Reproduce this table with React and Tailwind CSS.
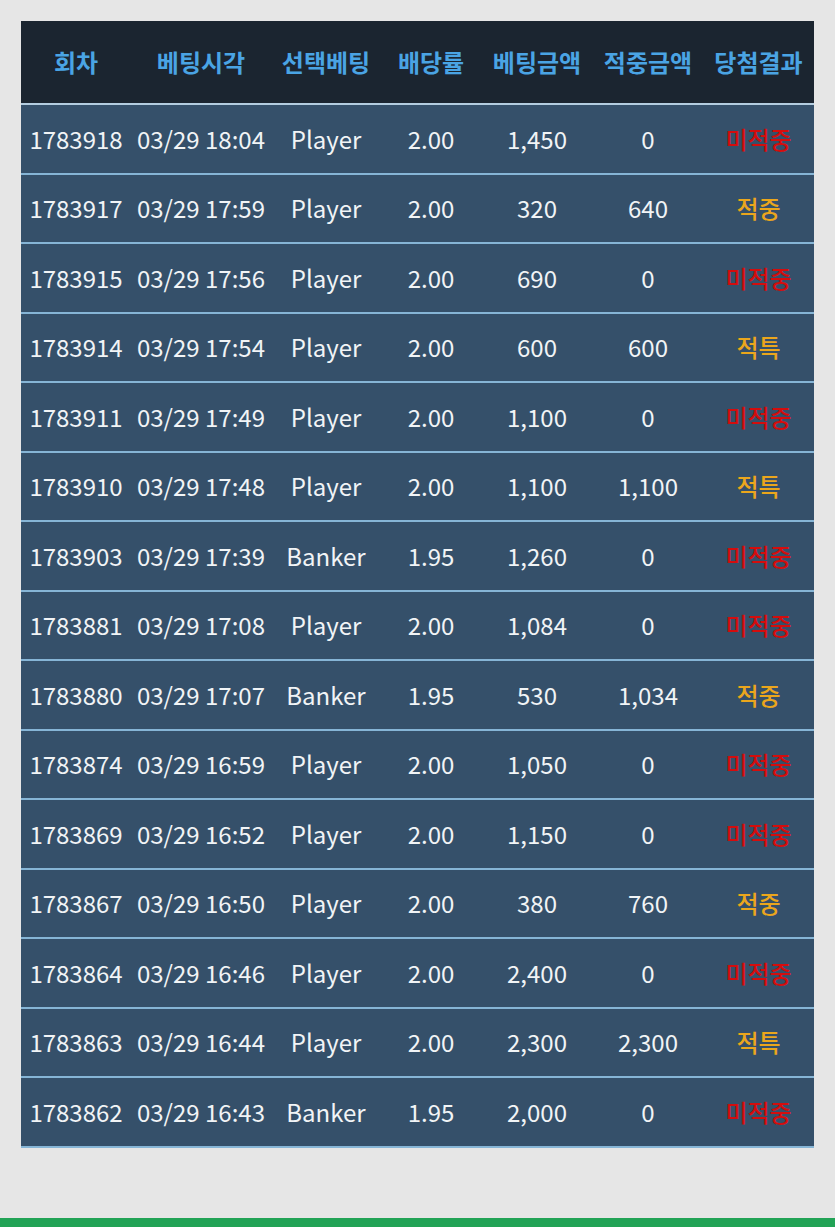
const headers = ["회차", "베팅시각", "선택베팅", "배당률", "베팅금액", "적중금액", "당첨결과"];

const rows = [
  ["1783918", "03/29 18:04", "Player", "2.00", "1,450", "0", "미적중"],
  ["1783917", "03/29 17:59", "Player", "2.00", "320", "640", "적중"],
  ["1783915", "03/29 17:56", "Player", "2.00", "690", "0", "미적중"],
  ["1783914", "03/29 17:54", "Player", "2.00", "600", "600", "적특"],
  ["1783911", "03/29 17:49", "Player", "2.00", "1,100", "0", "미적중"],
  ["1783910", "03/29 17:48", "Player", "2.00", "1,100", "1,100", "적특"],
  ["1783903", "03/29 17:39", "Banker", "1.95", "1,260", "0", "미적중"],
  ["1783881", "03/29 17:08", "Player", "2.00", "1,084", "0", "미적중"],
  ["1783880", "03/29 17:07", "Banker", "1.95", "530", "1,034", "적중"],
  ["1783874", "03/29 16:59", "Player", "2.00", "1,050", "0", "미적중"],
  ["1783869", "03/29 16:52", "Player", "2.00", "1,150", "0", "미적중"],
  ["1783867", "03/29 16:50", "Player", "2.00", "380", "760", "적중"],
  ["1783864", "03/29 16:46", "Player", "2.00", "2,400", "0", "미적중"],
  ["1783863", "03/29 16:44", "Player", "2.00", "2,300", "2,300", "적특"],
  ["1783862", "03/29 16:43", "Banker", "1.95", "2,000", "0", "미적중"],
];

const cols = "grid grid-cols-[110px_140px_110px_100px_112px_110px_111px]";

export default function App() {
  return (
    <div
      className="h-[1227px] flex flex-col bg-[#e6e6e6]"
      style={{ fontFamily: '"Noto Sans CJK KR", "Noto Sans", sans-serif' }}
    >
      <div className="flex-1 pt-[21px] px-[21px]">
        <div className="w-[793px]">
          <div className={`${cols} h-[84px] items-center bg-[#1b2530] border-b-2 border-[#b4cde0]`}>
            {headers.map((h) => (
              <div key={h} className="text-center text-[24px] font-bold text-[#4aa4e4]">
                {h}
              </div>
            ))}
          </div>
          {rows.map((r) => (
            <div
              key={r[0]}
              className={`${cols} h-[69.5px] items-center bg-[#35506a] border-b-2 border-[#86b5d6] text-[24px] text-[#f1f4f6]`}
            >
              {r.map((c, i) => {
                let color = "";
                if (i === 6) color = c === "미적중" ? "text-[#d40d0d] font-medium" : "text-[#eba61c] font-medium";
                return (
                  <div key={i} className={`text-center leading-none ${color}`}>
                    {c}
                  </div>
                );
              })}
            </div>
          ))}
        </div>
      </div>
      <div className="h-[9px] bg-[#22a356]" />
    </div>
  );
}
